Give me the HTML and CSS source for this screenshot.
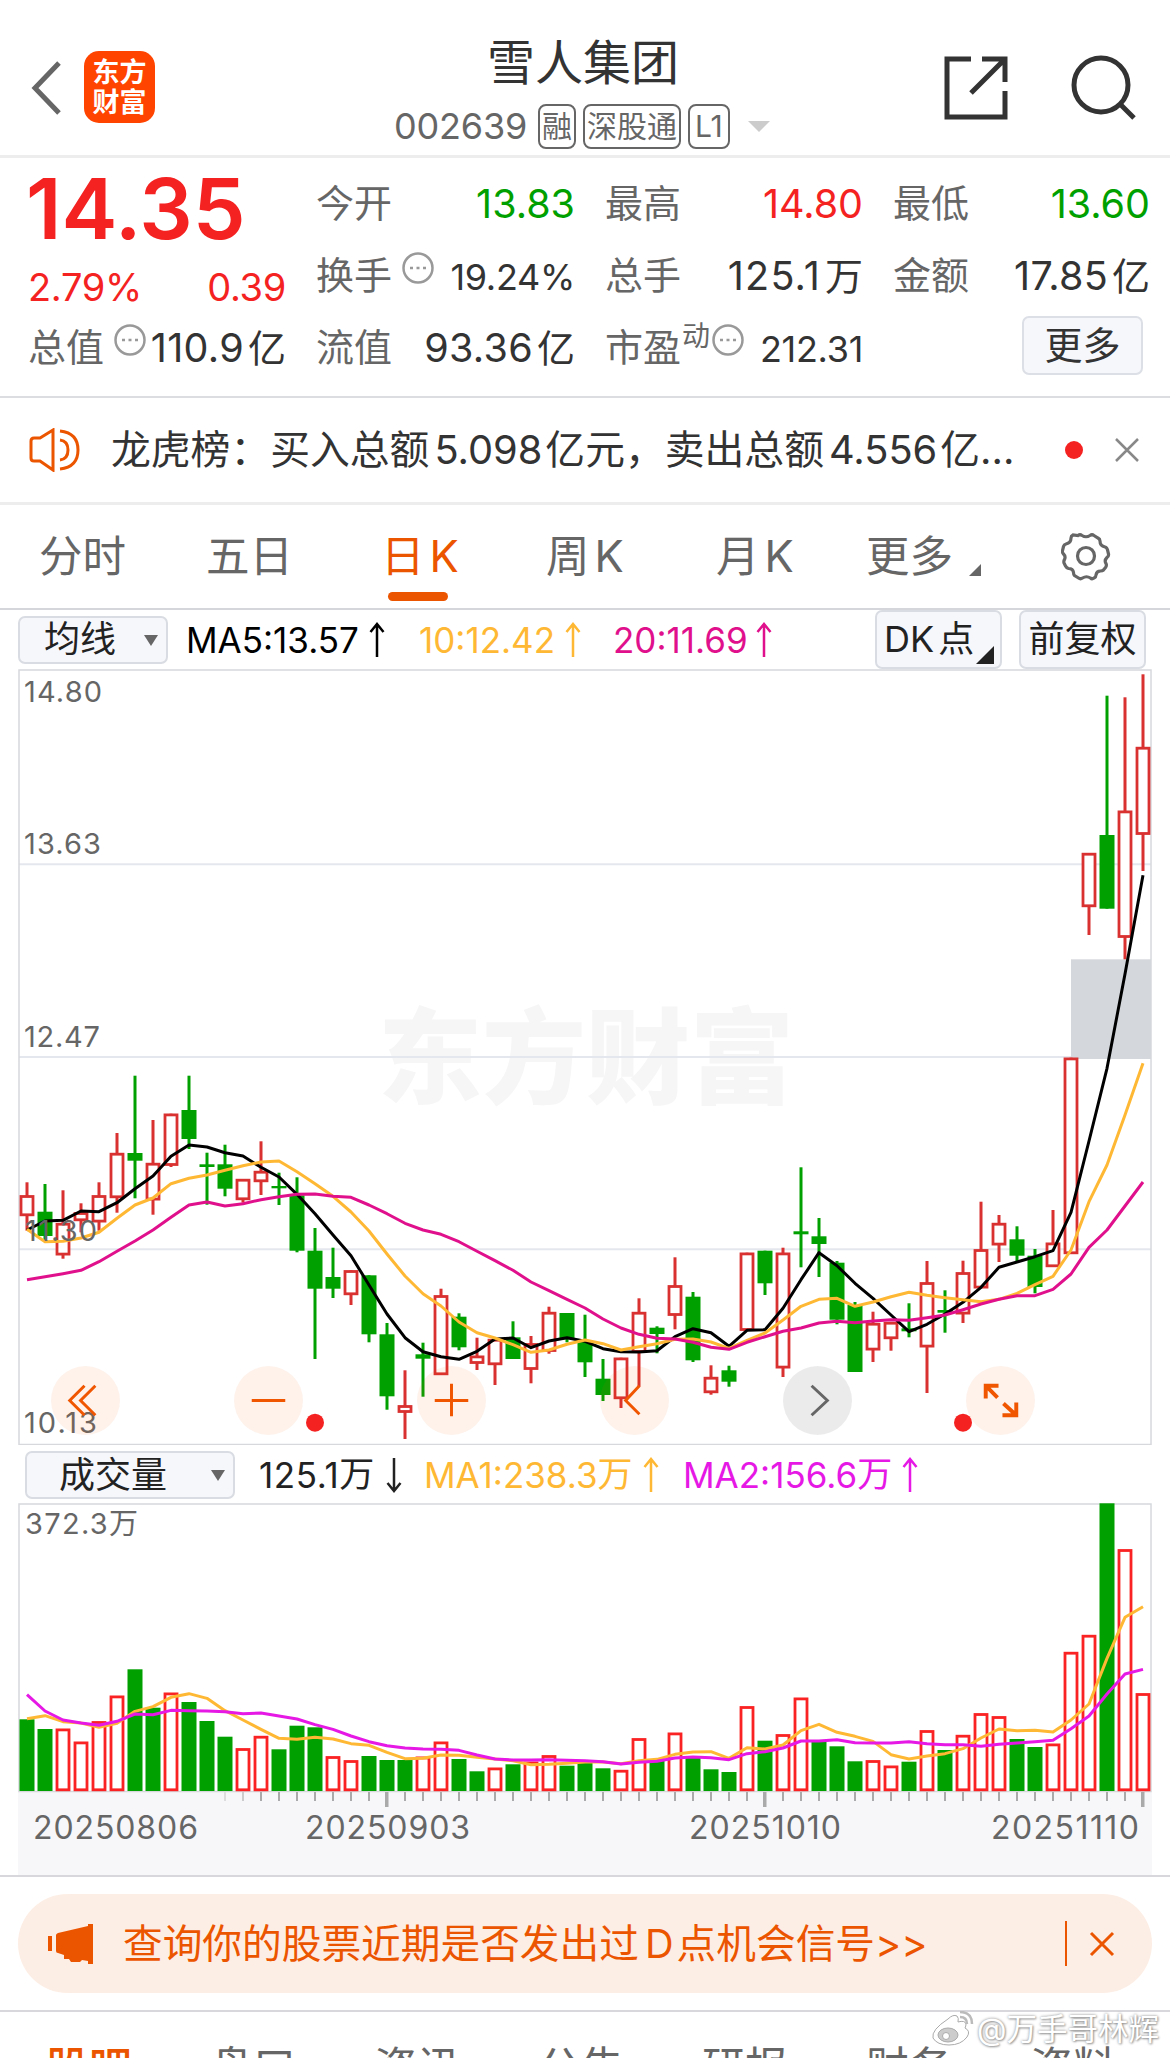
FILE: index.html
```html
<!DOCTYPE html>
<html lang="zh-CN">
<head>
    <meta charset="utf-8">
    <title>雪人集团 002639</title>
    <link rel="stylesheet" href="styles.css">
</head>
<body>
    <header class="header">
        <svg class="back" width="30" height="54" viewBox="0 0 30 54"><path d="M28 2L4 27l24 25"/></svg>
        <div class="logo"><span>东方</span><span>财富</span></div>
        <div class="stock">
            <div class="stock-name">雪人集团</div>
            <div class="stock-code">
                <span class="code">002639</span>
                <span class="badge">融</span>
                <span class="badge">深股通</span>
                <span class="badge badge-l1">L1</span>
                <i class="caret"></i>
            </div>
        </div>
        <svg class="share" width="64" height="64" viewBox="0 0 64 64"><path d="M27 3H3v58h58V35M38 3h23v23M61 3L27 37"/></svg>
        <svg class="search" width="66" height="66" viewBox="0 0 66 66"><circle cx="30" cy="30" r="27"/><path d="M50 50l13 13"/></svg>
    </header>

    <section class="quote">
        <div class="col col-price">
            <div class="price">14.35</div>
            <div class="row change"><span>2.79%</span><span>0.39</span></div>
            <div class="row"><label>总值</label><svg class="info" viewBox="0 0 32 32"><circle cx="16" cy="16" r="14.5"/><path d="M8 16h3M14.500 16h3M21 16h3"/></svg><b class="unit">110.9<u>亿</u></b></div>
        </div>
        <div class="col">
            <div class="row"><label>今开</label><b class="down">13.83</b></div>
            <div class="row"><label>换手</label><svg class="info" viewBox="0 0 32 32"><circle cx="16" cy="16" r="14.5"/><path d="M8 16h3M14.500 16h3M21 16h3"/></svg><b class="small">19.24%</b></div>
            <div class="row"><label>流值</label><b class="unit">93.36<u>亿</u></b></div>
        </div>
        <div class="col">
            <div class="row"><label>最高</label><b class="up">14.80</b></div>
            <div class="row"><label>总手</label><b class="unit wide">125.1<u>万</u></b></div>
            <div class="row"><label>市盈</label><sup>动</sup><svg class="info" viewBox="0 0 32 32"><circle cx="16" cy="16" r="14.5"/><path d="M8 16h3M14.500 16h3M21 16h3"/></svg><b class="small">212.31</b></div>
        </div>
        <div class="col">
            <div class="row"><label>最低</label><b class="down">13.60</b></div>
            <div class="row"><label>金额</label><b class="unit">17.85<u>亿</u></b></div>
            <div class="row"><span class="more">更多</span></div>
        </div>
    </section>

    <section class="notice">
        <svg class="speaker" width="52" height="44" viewBox="0 0 52 44"><path d="M24 2L11 10H5q-3 0-3 3v17q0 3 3 3h6l13 9zM31 12q8 1 8 10t-8 10M31 3q18 2 18 19T31 41"/></svg>
        <p>龙虎榜：买入总额<span class="num">5.098</span>亿元，卖出总额<span class="num">4.556</span>亿...</p>
        <i class="dot"></i>
        <svg class="close" width="26" height="26" viewBox="0 0 26 26"><path d="M2 2l22 22M24 2L2 24"/></svg>
    </section>

    <nav class="tabs">
        <a>分时</a>
        <a>五日</a>
        <a class="active">日<span>K</span></a>
        <a>周<span>K</span></a>
        <a>月<span>K</span></a>
        <a class="tab-more">更多<i></i></a>
        <svg class="gear" width="50" height="50" viewBox="0 0 50 50"><path d="M17 4.500q2-1.500 4 0q4 2.500 8 0q2-1.500 4 0l4 2.500q2 1 2 3q0 5 5 6q2 .5 2.500 3l1 4q.5 2-1.500 3.500q-3 3-1 6q1 2-.5 4l-2 2.500q-1 1-3 1q-4 0-4.500 4q0 2-2 3q-2 1.500-3.500 0q-4-2.500-8 0q-2 1.500-4 0l-4-2.500q-1-1-1-3q-.5-4-5-4q-2-.5-3-2.500l-1.500-3q-.5-2 .5-3.500q1.500-3-1-5.500q-1.500-1.500-1-3.500l1-4q.5-2 2.500-2.500q5-1 5-6q0-2 2-3z"/><circle cx="25" cy="25" r="8.500"/></svg>
    </nav>

    <div class="bar ma-bar">
        <span class="btn btn-ma">均线<i class="tri"></i></span>
        <span class="ma ma5">MA5:13.57<svg class="arrow" viewBox="0 0 16 36"><path d="M8 35V2M1.500 10L8 2l6.500 8"/></svg></span>
        <span class="ma ma10">10:12.42<svg class="arrow" viewBox="0 0 16 36"><path d="M8 35V2M1.500 10L8 2l6.500 8"/></svg></span>
        <span class="ma ma20">20:11.69<svg class="arrow" viewBox="0 0 16 36"><path d="M8 35V2M1.500 10L8 2l6.500 8"/></svg></span>
        <span class="btn btn-tall btn-dk"><span>DK</span>点<i class="corner"></i></span>
        <span class="btn btn-tall">前复权</span>
    </div>

    <div class="chart">
        <svg id="kline" width="1134" height="776" viewBox="18 669 1134 776"></svg>
        <div class="controls">
            <span class="ctl"><svg viewBox="0 0 70 70"><path d="M34 20L19 35l15 15M45 20L30 35l15 15"/></svg></span>
            <span class="ctl"><svg viewBox="0 0 70 70"><path d="M18 35h34"/></svg></span>
            <span class="ctl"><svg viewBox="0 0 70 70"><path d="M18 35h34M35 18v33"/></svg></span>
            <span class="ctl"><svg viewBox="0 0 70 70"><path d="M40 20L26 35l14 14"/></svg></span>
            <span class="ctl ctl-gray"><svg viewBox="0 0 70 70"><path d="M29 20l16 15-16 15"/></svg></span>
            <span class="ctl ctl-full"><svg viewBox="0 0 70 70"><path d="M33 20H20v13M20 20l12 12M51 37v13H37M51 50L38 38"/></svg></span>
        </div>
    </div>

    <div class="bar vol-bar">
        <span class="btn btn-vol">成交量<i class="tri"></i></span>
        <span class="ma vol">125.1<u>万</u><svg class="arrow" viewBox="0 0 16 36"><path d="M8 1v33M1.500 26L8 34l6.500-8"/></svg></span>
        <span class="ma vma1">MA1:238.3<u>万</u><svg class="arrow" viewBox="0 0 16 36"><path d="M8 35V2M1.500 10L8 2l6.500 8"/></svg></span>
        <span class="ma vma2">MA2:156.6<u>万</u><svg class="arrow" viewBox="0 0 16 36"><path d="M8 35V2M1.500 10L8 2l6.500 8"/></svg></span>
    </div>

    <div class="chart chart-vol">
        <svg id="volume" width="1134" height="372" viewBox="18 1503 1134 372"></svg>
    </div>

    <section class="signal">
        <div class="signal-box">
            <svg class="horn" width="48" height="40" viewBox="0 0 48 40"><path d="M0 12h4v15H0zM8 11q0-1 2-2L40 2V0h5v40h-5v-3l-6-1-2 2h-9l-2-3h-5v-4l-6-2q-2 0-2-2z"/></svg>
            <p>查询你的股票近期是否发出过<span class="num">D</span>点机会信号&gt;&gt;</p>
            <i class="divider"></i>
            <svg class="close" width="26" height="26" viewBox="0 0 26 26"><path d="M2 2l22 22M24 2L2 24"/></svg>
        </div>
    </section>

    <nav class="bottom-tabs">
        <a class="active">股吧</a><a>盘口</a><a>资讯</a><a>公告</a><a>研报</a><a>财务</a><a>资料</a>
    </nav>

    <div class="weibo">
        <svg width="44" height="36" viewBox="0 0 44 36"><path d="M17 8q5-5 9-3 2 2 1 6 7-2 8 2 0 2-1 4 6 3 2 9-6 8-18 8T2 27q-2-8 15-19z"/><ellipse cx="17" cy="24" rx="10" ry="7" class="eye"/><circle cx="15" cy="25" r="3.500"/><path class="wave" d="M29 6q7 0 7 7M29 1q12 0 12 12"/></svg>
        <span>@万手哥林辉</span>
    </div>

    <script src="chart.js"></script>
</body>
</html>
```
FILE: styles.css
```css
* {
    box-sizing: border-box;
}
body {
    margin: 0;
    width: 1170px;
    height: 2058px;
    overflow: hidden;
    position: relative;
    background: #fff;
    color: #333;
    font-family: Inter, "Noto Sans CJK SC", sans-serif;
}
p {
    margin: 0;
}
svg {
    display: block;
    flex: none;
}
svg path, svg circle {
    fill: none;
}
i {
    display: block;
    flex: none;
}
u {
    text-decoration: none;
}

/* header */
.header {
    height: 158px;
    border-bottom: 3px solid #ededed;
    display: flex;
    padding-left: 31px;
}
.back {
    margin-top: 61px;
    stroke: #666;
    stroke-width: 5;
}
.logo {
    width: 71px;
    height: 72px;
    margin: 51px 0 0 23px;
    border-radius: 15px;
    background: #ff4400;
    color: #fff;
    font-size: 27px;
    font-weight: 700;
    line-height: 30px;
    padding-top: 7px;
    text-align: center;
}
.logo span {
    display: block;
}
.stock {
    width: 400px;
    margin-left: 239px;
}
.stock-name {
    font-size: 48px;
    line-height: 60px;
    margin-top: 33px;
    padding-left: 93px;
}
.stock-code {
    display: flex;
    align-items: center;
    height: 46px;
    margin-top: 10px;
    color: #666;
}
.code {
    font-size: 36px;
    width: 144px;
    letter-spacing: -0.2px;
}
.badge {
    height: 45px;
    line-height: 40px;
    border: 2px solid #666;
    border-radius: 8px;
    font-size: 30px;
    padding: 0 2px;
    margin-right: 7px;
}
.badge-l1 {
    padding: 0 5px;
}
.caret {
    border: 11px solid transparent;
    border-top: 11px solid #ccc;
    border-bottom: 0;
    margin-left: 11px;
}
.share {
    margin: 56px 0 0 150px;
    stroke: #333;
    stroke-width: 5;
}
.search {
    margin: 55px 0 0 63px;
    stroke: #333;
    stroke-width: 5;
}

/* quote */
.quote {
    height: 240px;
    border-bottom: 2px solid #dcdde0;
    display: grid;
    grid-template-columns: 258px 259px 258px 257px;
    column-gap: 30px;
    padding: 10px 0 0 28px;
}
.row {
    height: 72px;
    display: flex;
    align-items: center;
    font-size: 38px;
}
.row label {
    color: #666;
    padding-bottom: 7px;
}
.row b {
    font-weight: 400;
    font-size: 39.5px;
    margin-left: auto;
    white-space: nowrap;
}
.row b.unit {
    padding-bottom: 5px;
    letter-spacing: 0.3px;
}
.row b.wide {
    letter-spacing: 1.2px;
}
.row b.small {
    font-size: 36px;
    letter-spacing: -0.3px;
    padding-top: 2px;
}
.row u {
    font-size: 38px;
    margin-left: 4px;
    letter-spacing: 0;
}
.row sup {
    font-size: 28px;
    color: #666;
    line-height: 28px;
    margin: 0 0 24px 1px;
}
.price {
    height: 84px;
    line-height: 82px;
    font-size: 84px;
    font-weight: 600;
    color: #f52222;
    margin-left: -2px;
}
.change {
    height: 60px;
    padding-top: 9px;
    color: #f52222;
    justify-content: space-between;
}
.change span {
    letter-spacing: -0.3px;
}
.up {
    color: #f52222;
}
.down {
    color: #00a000;
}
.info {
    width: 32px;
    height: 32px;
    margin: 0 0 16px 10px;
    stroke: #999;
    stroke-width: 2.5;
}
.row sup + .info {
    margin-left: 2px;
}
.more {
    width: 121px;
    height: 59px;
    line-height: 54px;
    margin: -6px 0 0 129px;
    text-align: center;
    background: #f6f7fb;
    border: 2px solid #dcdfe6;
    border-radius: 7px;
}

/* notice */
.notice {
    height: 107px;
    border-bottom: 3px solid #ededed;
    display: flex;
    align-items: center;
    padding-left: 29px;
}
.speaker {
    stroke: #ec5500;
    stroke-width: 3;
}
.notice p {
    font-size: 39.8px;
    width: 952px;
    margin-left: 30px;
    padding-bottom: 7px;
    white-space: nowrap;
}
.num {
    padding: 0 3px 0 6px;
}
.notice .num {
    padding: 0 3px 0 5px;
}
.dot {
    width: 18px;
    height: 18px;
    border-radius: 50%;
    background: #f52222;
    margin-left: 2px;
}
.close {
    margin-left: 31px;
    stroke: #888;
    stroke-width: 2.5;
}

/* period tabs */
.tabs {
    height: 105px;
    border-bottom: 2px solid #d4d6dc;
    display: flex;
    color: #666;
    font-size: 43.5px;
    line-height: 62px;
    padding: 20px 0 0 39px;
}
.tabs a {
    width: 167px;
    flex: none;
}
.tabs a span {
    padding-left: 5px;
}
.tabs .active {
    color: #ec5500;
    padding-left: 8px;
}
.tabs .active::after {
    content: "";
    display: block;
    width: 60px;
    height: 9px;
    border-radius: 5px;
    background: #ec5500;
    margin: 5px 0 0 7px;
}
.tabs a:nth-child(4) {
    padding-left: 6px;
}
.tabs a:nth-child(5) {
    padding-left: 9px;
    width: 159px;
}
.tabs .tab-more {
    display: flex;
    align-items: center;
    height: 62px;
    width: 160px;
}
.tab-more i {
    border-left: 12px solid transparent;
    border-bottom: 12px solid #666;
    margin: 28px 0 0 16px;
}
.gear {
    margin: 6px 0 0 35px;
    stroke: #666;
    stroke-width: 3.2;
}

/* indicator bars */
.bar {
    height: 59px;
    display: flex;
    align-items: center;
    padding-left: 18px;
}
.btn {
    height: 48px;
    display: flex;
    align-items: center;
    background: #f6f7fb;
    border: 2px solid #d9dce2;
    border-radius: 7px;
    font-size: 36px;
    line-height: 42px;
    color: #222;
    flex: none;
    padding-bottom: 1px;
}
.btn-ma {
    width: 150px;
    padding-left: 24px;
}
.btn-vol {
    width: 210px;
    padding-left: 32px;
}
.tri {
    border: 7px solid transparent;
    border-top: 11px solid #666;
    border-bottom: 0;
    margin: 2px 0 0 28px;
}
.btn-vol .tri {
    margin-left: 44px;
}
.ma {
    display: flex;
    align-items: center;
    font-size: 35px;
    line-height: 42px;
    white-space: nowrap;
}
.ma u {
    margin-top: -2px;
}
.arrow {
    width: 16px;
    height: 36px;
    stroke: currentColor;
    stroke-width: 2.5;
    margin-left: 10px;
}
.ma5 {
    color: #000;
    width: 233px;
    margin-left: 18px;
}
.ma10, .vma1 {
    color: #ffb833;
}
.ma10 {
    width: 194px;
}
.ma20 {
    color: #e0108c;
    width: 262px;
}
.ma20 .arrow {
    margin-left: 8px;
}
.btn-tall {
    width: 127px;
    height: 59px;
    justify-content: center;
    position: relative;
}
.btn-dk {
    justify-content: flex-start;
    padding-left: 7px;
    margin-right: 17px;
}
.btn-dk span {
    padding-right: 4px;
}
.corner {
    position: absolute;
    right: 6px;
    bottom: 3px;
    border-left: 18px solid transparent;
    border-bottom: 18px solid #222;
}
.vol-bar {
    height: 58px;
    padding: 2px 0 0 25px;
}
.vol {
    color: #222;
    width: 165px;
    margin-left: 24px;
    letter-spacing: 0.6px;
}
.vol .arrow {
    margin-left: 11px;
}
.vma1 {
    width: 259px;
}
.vma2 {
    color: #e518e5;
}

/* charts */
.chart {
    position: relative;
    width: 1134px;
    margin-left: 18px;
}
.chart text {
    font-size: 29px;
    fill: #666;
}
.chart .date {
    font-size: 32px;
}
.chart .brand {
    font-size: 104px;
    font-weight: 900;
    fill: #f6f6f6;
}
.frame {
    fill: none;
    stroke: #d6d8dc;
    stroke-width: 1.5;
}
.grid {
    stroke: #e4e7ee;
    stroke-width: 2;
}
.line {
    stroke-width: 3;
    stroke-linejoin: round;
}
.controls {
    position: absolute;
    left: 33px;
    top: 697px;
    display: flex;
    gap: 114px;
}
.ctl {
    width: 69px;
    height: 69px;
    border-radius: 50%;
    background: rgba(236, 85, 0, 0.08);
}
.ctl svg {
    width: 69px;
    height: 69px;
    stroke: #f05500;
    stroke-width: 3;
}
.ctl-full svg {
    stroke-width: 4;
}
.ctl-gray {
    background: rgba(0, 0, 0, 0.08);
}
.ctl-gray svg {
    stroke: #666;
}

/* signal banner */
.signal {
    height: 137px;
    border-top: 2px solid #d8d8dc;
    border-bottom: 2px solid #d8d8dc;
    padding: 17px 18px;
}
.signal-box {
    height: 99px;
    border-radius: 50px;
    background: #fdeee5;
    color: #ec5500;
    display: flex;
    align-items: center;
    padding-left: 30px;
}
.horn path {
    fill: #ec5500;
}
.signal p {
    font-size: 39.7px;
    width: 940px;
    margin-left: 27px;
    padding-bottom: 6px;
    white-space: nowrap;
}
.divider {
    width: 2px;
    height: 45px;
    background: #ec5500;
    margin-left: 2px;
}
.signal .close {
    margin-left: 22px;
    stroke: #ec5500;
    stroke-width: 3;
}

.bottom-tabs {
    display: flex;
    padding: 24px 0 0 7px;
    font-size: 43px;
    line-height: 62px;
    color: #666;
}
.bottom-tabs a {
    width: 164px;
    text-align: center;
}
.bottom-tabs .active {
    color: #ec5500;
    font-weight: 500;
}

/* user mark over the corner */
.weibo {
    position: absolute;
    right: 11px;
    top: 2009px;
    display: flex;
    align-items: center;
    color: #fff;
    font-size: 30.5px;
    line-height: 40px;
    text-shadow: 0 0 3px #888, 1px 1px 2px #aaa;
}
.weibo svg {
    stroke: #aaa;
    stroke-width: 1;
    margin-right: 2px;
}
.weibo path, .weibo circle {
    fill: #fff;
}
.weibo .eye {
    fill: #ccc;
}
.weibo .wave {
    fill: none;
    stroke: #bbb;
    stroke-width: 2.5;
}
```
FILE: chart.js
```js
const RED = '#d93030';
const GREEN = '#00a000';
const STEP = 18;
const X0 = 27;

// [up/down, high, body top, body bottom, low]
const candles = [
    ['r',1182.3,1195.3,1216,1230.7],['g',1184,1211.7,1236,1240],['r',1190.3,1223,1255.3,1258.7],
    ['r',1203.3,1212.3,1221,1232.3],['r',1182.3,1195.3,1222.3,1230.7],['r',1133,1153,1198,1212.7],
    ['g',1075.7,1153,1160.7,1198.3],['r',1120,1163,1200.3,1214.7],['r',1113.7,1113.7,1165.7,1167],
    ['g',1075.7,1110,1139,1149],['g',1152.7,1164.3,1167,1204.7],['g',1144.7,1164.3,1188.7,1196.3],
    ['r',1179,1179,1200,1202.7],['r',1141.3,1171,1182,1195],['g',1172.7,1186,1188.3,1205],
    ['g',1177.3,1195.3,1250.7,1252.3],['g',1228,1250.7,1288.7,1359],['g',1247.7,1277,1288.7,1298],
    ['r',1270.3,1270.3,1295,1305],['g',1275.3,1275.3,1334.3,1342.3],['g',1323,1334.3,1396.3,1409.7],
    ['r',1370.3,1405.3,1412.7,1439],['g',1342.7,1354.3,1358.7,1396.7],['r',1288.7,1295.3,1375,1375],
    ['g',1313.3,1316.7,1347.3,1350.3],['r',1337.7,1355.7,1363.7,1370],['r',1339,1339,1365,1385],
    ['g',1321.3,1337.3,1359,1359],['r',1336,1343.3,1369.7,1383.3],['r',1306.7,1312,1351.7,1353.7],
    ['g',1313,1313,1339.3,1342.3],['g',1314.7,1340,1362.3,1377],['g',1359,1378.7,1395,1401],
    ['r',1357.7,1357.7,1399,1408],['r',1298.3,1312,1352.7,1386.7],['g',1326.3,1327.7,1334,1353.3],
    ['r',1257.3,1285.3,1315.7,1329.3],['g',1292,1296.7,1360.3,1362],['r',1365.3,1377,1393,1394.7],
    ['g',1365.7,1370.3,1381.7,1386.7],['r',1252.7,1252.7,1330.7,1330.7],['g',1250.7,1250.7,1283.3,1295],
    ['r',1247.7,1252.7,1368.3,1377],['g',1167.3,1231.3,1234.3,1267.3],['g',1218,1236.3,1244,1277],
    ['g',1261,1262.7,1319.7,1324.3],['g',1302,1305,1372,1372],['r',1311.7,1323,1350.3,1362],
    ['r',1322,1322,1339,1350.7],['g',1303.3,1328.3,1331.3,1337.3],['r',1261,1282.3,1347.3,1393],
    ['g',1290.3,1310,1312.7,1332.7],['r',1260.7,1272.3,1314.3,1323],['r',1201.7,1249.3,1288.3,1288.3],
    ['r',1215,1223,1245.3,1262],['g',1226.3,1239.3,1255.7,1261.7],['g',1249,1255.7,1287,1293.3],
    ['r',1210,1242.7,1267,1267],['r',1057.7,1057.7,1254,1254],['r',853,853,907,935],
    ['g',695.7,835,908.7,908.7],['r',697.3,810.7,937.7,959.3],['r',674.3,747,834.7,871]
];

const ma5 = [1230,1221,1220.3,1211,1211.7,1202.7,1188.7,1176,1156.3,1145,1147,1152.7,1156,1167.3,1177,1194.3,
    1213.7,1235,1255.7,1285,1314,1337.7,1351.7,1356.7,1359.3,1351.3,1339,1338,1347.7,1341,1337.7,1341.3,1348.7,
    1351.7,1352,1350.7,1336.7,1328.7,1332.7,1346.3,1330.3,1329.7,1308.3,1279.7,1252.7,1265.7,1283.3,1298.3,1315,
    1331.7,1324.3,1314,1302.3,1287.3,1267.3,1262,1256.7,1250.7,1212.3,1141,1068.3,974,875.3];
const ma10 = [1229.3,1241.7,1241.3,1238,1232.3,1218.3,1205,1198,1183.7,1178.3,1175,1170.3,1165.7,1162,1161,1171.7,
    1183.7,1196.3,1212,1231,1254,1276,1293.7,1306,1322,1332.7,1338,1344.7,1352.3,1350,1344.3,1340,1343.7,1350,
    1346.7,1343.7,1339.3,1339,1342,1348.3,1340.3,1333,1320,1306.3,1299.3,1298.3,1306.3,1302,1296.7,1292.3,1295.3,
    1297.7,1299.7,1301.7,1299.3,1293.3,1284.7,1276.3,1250,1201.7,1165,1115,1063.3];
const ma20 = [1279.7,1276.7,1273.7,1270.3,1261.7,1251.3,1241,1230,1217.3,1205,1202,1206,1203.7,1199.7,1196.7,1194.3,
    1194,1196.3,1197.3,1205,1213.7,1223.3,1230,1234.3,1241.7,1251.3,1260.7,1270.3,1282,1290.7,1299.3,1308,1319,
    1328,1334.3,1338.3,1339,1342.3,1347.3,1349.3,1342.3,1336.7,1331.3,1328,1323,1321.3,1322.7,1321,1319.7,1320.3,
    1317.7,1315,1309.7,1304,1299.3,1295.7,1295.7,1289.3,1274,1247.3,1230,1206,1182];

const volColors = 'ggrrrrggrgggrrgggrrgggrrggrgrrgggrrgrgggrgrrgggrrgrgrrrggrrrgrr';
const volTops = [1719.3,1729,1728.7,1741.7,1721.3,1695.7,1669.3,1707.7,1692.7,1702,1721,1736.7,1748.3,1736,1749.3,
    1725.7,1727.3,1756.3,1760.3,1756,1760,1760,1756.7,1741.7,1759,1771.3,1767.7,1764.3,1761.7,1755.3,1765.7,1762.7,
    1768.3,1770,1738.3,1760.7,1732.7,1756.7,1769.3,1772,1706.3,1740.7,1734.3,1697.7,1741.7,1746.3,1761.3,1760.3,
    1765.7,1761.7,1730.3,1750,1735,1713.3,1716.3,1739,1747,1743.7,1652,1635,1503.3,1549.3,1693.3];
// volume averages, in thirds of a pixel from the panel origin
const vma1 = [836,827,845,849,862,850,814,800,772,761,775,812,840,868,895,898,892,897,911,916,937,956,955,945,946,
    952,957,962,974,973,970,966,966,971,962,958,943,936,935,955,923,927,915,872,853,877,889,904,944,957,948,941,
    926,894,867,872,871,876,840,792,655,532,500].map(v => 1440 + v / 3);
const vma2 = [764,813,840,849,856,844,822,824,811,812,813,815,821,819,828,837,854,868,888,905,917,924,927,928,931,
    945,957,960,960,959,961,962,965,972,967,964,954,951,953,959,941,935,924,903,903,899,908,909,909,905,911,914,
    914,919,913,909,905,901,866,828,762,702,688].map(v => 1440 + v / 3);

function rect(x, y, w, h, fill) {
    return `<rect x="${x}" y="${y}" width="${w}" height="${h}" fill="${fill}"/>`;
}

function hollow(x, top, bottom, color) {
    return `<rect x="${x - 6}" y="${top + 1.2}" width="12" height="${Math.max(bottom - top - 2.4, 1)}" fill="#fff" stroke="${color}" stroke-width="2.8"/>`;
}

function line(values, color) {
    const pts = values.map((y, i) => `${X0 + i * STEP},${y}`).join(' ');
    return `<polyline class="line" points="${pts}" fill="none" stroke="${color}"/>`;
}

function label(x, y, width, text, cls) {
    return `<text x="${x}" y="${y}" textLength="${width}" class="${cls || ''}">${text}</text>`;
}

function drawKline() {
    let s = '<text class="brand" x="378" y="1096" textLength="416">东方财富</text>';
    [864.3, 1057, 1249.3].forEach(y => {
        s += `<path class="grid" d="M19 ${y}H1151"/>`;
    });
    s += '<rect class="frame" x="19" y="670" width="1132" height="774.5"/>';
    s += rect(1071, 959.3, 80, 99.7, '#d4d8dd');
    candles.forEach((c, i) => {
        const x = X0 + i * STEP;
        const color = c[0] === 'r' ? RED : GREEN;
        s += rect(x - 1.5, c[1], 3, c[4] - c[1], color);
        if (c[0] === 'r') {
            s += hollow(x, c[2], c[3], color);
        } else {
            s += rect(x - 7.5, c[2], 15, c[3] - c[2], color);
        }
    });
    s += line(ma5, '#000') + line(ma10, '#ffb833') + line(ma20, '#e0108c');
    s += label(24, 702, 78, '14.80') + label(24, 854, 77, '13.63') + label(24, 1047, 76, '12.47');
    s += label(25, 1241, 72, '11.30') + label(24, 1433, 73, '10.13');
    s += '<circle cx="315" cy="1422.7" r="9" style="fill:#f52222"/><circle cx="963" cy="1422.7" r="9" style="fill:#f52222"/>';
    document.getElementById('kline').innerHTML = s;
}

function drawVolume() {
    let s = rect(18, 1791, 1134, 84, '#f7f7fa');
    s += '<rect class="frame" x="19" y="1504" width="1132" height="287.500"/>';
    volTops.forEach((top, i) => {
        const x = X0 + i * STEP;
        if (volColors[i] === 'r') {
            s += hollow(x, top, 1791, '#fa2222');
        } else {
            s += rect(x - 7.5, top, 15, 1791 - top, GREEN);
        }
        if (i > 10) {
            const long = i === 20 || i === 41 || i === 62;
            const gray = i === 11 ? '#ddd' : i === 12 ? '#ccc' : '#aaa';
            s += long ? rect(x - 2, 1792, 3.5, 15, '#aaa') : rect(x - 1, 1792, 2, 9, gray);
        }
    });
    s += line(vma1, '#ffb833') + line(vma2, '#e518e5');
    s += label(25, 1534, 113, '372.3万');
    s += label(33, 1839, 165, '20250806', 'date') + label(305, 1839, 165, '20250903', 'date');
    s += label(689, 1839, 152, '20251010', 'date') + label(991, 1839, 148, '20251110', 'date');
    document.getElementById('volume').innerHTML = s;
}

drawKline();
drawVolume();
```
